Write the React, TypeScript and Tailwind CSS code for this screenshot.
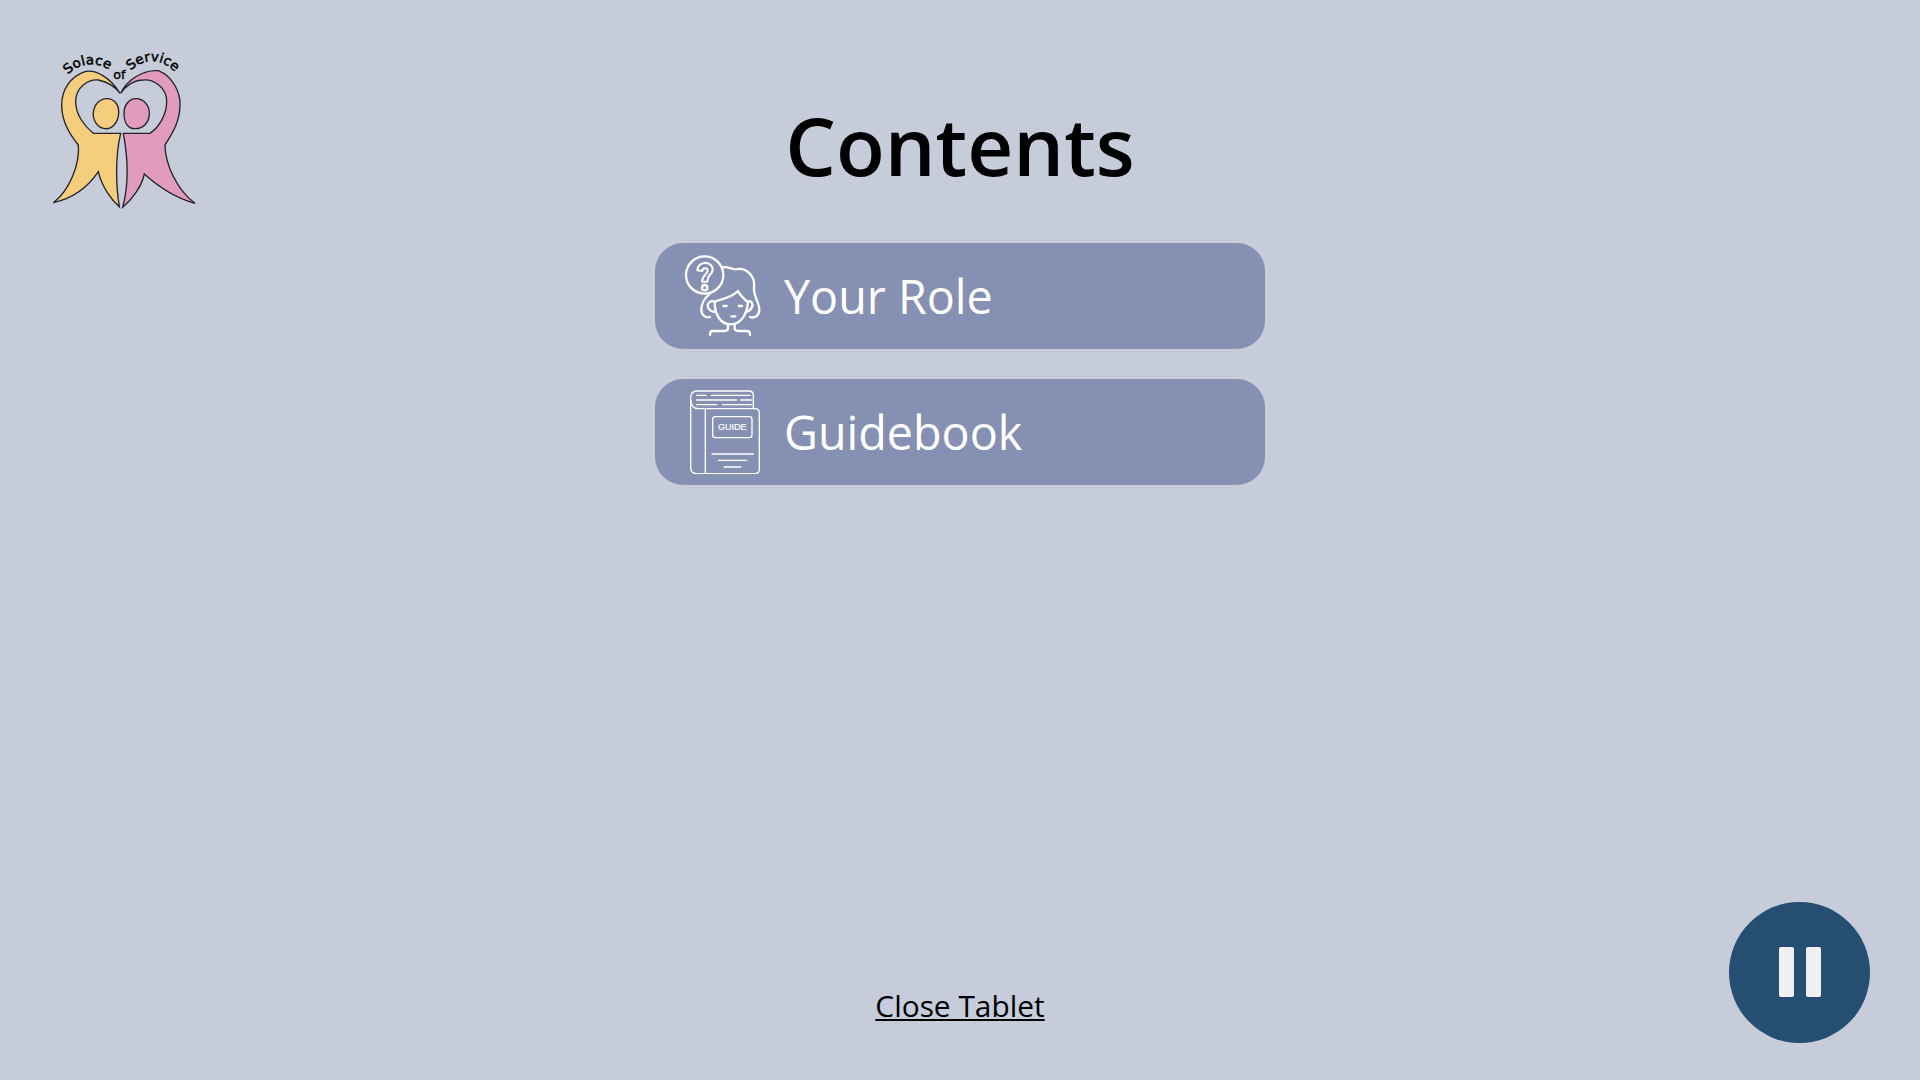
function Logo() {
  return (
    <svg width="190" height="190" viewBox="0 0 570 570" className="absolute left-[30px] top-[30px]">
      <defs>
        <path id="arc1" d="M114 134 C150 96 205 92 250 128" />
        <path id="arc2" d="M302 122 C345 80 405 84 446 140" />
      </defs>
      <path
        d="M270 190 C240 140 195 118 165 125 C120 140 95 180 95 225 C95 280 125 320 145 345 C150 400 120 480 70 518 C130 505 175 470 205 425 C215 470 245 510 268 530 C258 470 255 380 272 310 L190 310 C165 290 137 255 137 215 C137 170 175 148 205 150 C235 155 260 175 270 190 Z"
        fill="#f4cd7d" stroke="#23232b" strokeWidth="4"
      />
      <path
        d="M272 190 C290 150 340 118 385 122 C430 140 452 190 450 225 C450 280 420 320 405 345 C405 400 440 480 495 520 C440 505 385 470 343 432 C335 470 305 510 278 532 C295 470 295 390 280 310 L360 310 C390 290 410 250 410 215 C410 170 370 148 340 150 C310 150 285 170 272 190 Z"
        fill="#e09bbd" stroke="#23232b" strokeWidth="4"
      />
      <path d="M228 206 C250 204 268 222 266 250 C264 280 245 298 225 296 C203 294 188 272 190 248 C192 224 208 208 228 206 Z" fill="#f4cd7d" stroke="#23232b" strokeWidth="4" />
      <path d="M318 206 C342 206 360 228 358 254 C356 280 338 296 315 296 C295 296 282 280 282 250 C282 224 298 206 318 206 Z" fill="#e09bbd" stroke="#23232b" strokeWidth="4" />
      <text fontFamily="'DejaVu Sans', sans-serif" fontSize="40" fill="#000" stroke="#000" strokeWidth="1.5">
        <textPath href="#arc1" textLength="135" lengthAdjust="spacing">Solace</textPath>
      </text>
      <text x="250" y="146" fontFamily="'DejaVu Sans', sans-serif" fontSize="38" fill="#000" stroke="#000" strokeWidth="1.2">of</text>
      <text fontFamily="'DejaVu Sans', sans-serif" fontSize="40" fill="#000" stroke="#000" strokeWidth="1.5">
        <textPath href="#arc2" textLength="150" lengthAdjust="spacing">Service</textPath>
      </text>
    </svg>
  );
}

function RoleIcon() {
  return (
    <svg width="80" height="84" viewBox="100 60 240 252" fill="none" stroke="#fff" strokeWidth="7" strokeLinecap="round" strokeLinejoin="round" className="mt-[2px]">
      <circle cx="162" cy="120" r="56" />
      <path d="M140 106 C140 90 154 83 166 84 C182 85 190 100 184 111 C178 122 170 122 170 140 H154 C154 122 172 116 171 106 C170 98 156 97 155 108 Z" strokeWidth="6" />
      <circle cx="162" cy="158" r="8" />
      <path d="M216 97 C235 92 245 108 262 102 C290 100 315 125 310 160 C308 180 328 210 326 225 C325 245 310 250 298 246" />
      <path d="M176 178 C160 190 152 210 152 225 C152 240 165 250 178 246" />
      <path d="M192 200 C205 195 240 190 262 168 C270 185 285 195 292 202 C288 240 270 268 240 268 C210 268 192 240 192 200 Z" />
      <path d="M192 200 C180 195 168 205 172 216 C175 226 185 232 194 230" />
      <path d="M292 200 C302 195 308 208 304 216 C300 226 295 228 288 230" />
      <path d="M218 213 H228 M264 213 H274 M242 244 H254" />
      <path d="M232 268 V280 C232 286 228 288 222 288 H186 C180 288 178 292 178 300" />
      <path d="M252 268 V280 C252 286 256 288 262 288 H290 C296 288 298 292 298 300" />
    </svg>
  );
}

function GuideIcon() {
  return (
    <svg width="70" height="84" viewBox="120 60 210 252" fill="none" stroke="#fff" strokeWidth="4" strokeLinecap="round" strokeLinejoin="round" className="ml-[1px]">
      <path d="M166 116 H314 C323 116 328 122 328 130 V298 C328 306 322 311 314 311 H140 C128 311 122 303 122 292 V88" />
      <path d="M310 116 V76 C310 68 304 63 296 63 H140 C128 63 122 72 122 86 C122 104 130 116 146 116 H166" />
      <path d="M166 116 V311" />
      <path d="M140 76 H168 M184 76 H300 M140 90 H260 M272 90 H304 M140 104 H200 M218 104 H304 " />
      <rect x="188" y="140" width="118" height="63" rx="8" />
      <text x="247" y="181" textAnchor="middle" fontFamily="'Liberation Sans', sans-serif" fontSize="27" fill="#fff" stroke="#fff" strokeWidth="0.6">GUIDE</text>
      <path d="M186 252 H310 M205 271 H290 M222 291 H272" />
    </svg>
  );
}

function MenuButton({ label, children }: { label: string; children: React.ReactNode }) {
  return (
    <button className="flex h-[106px] w-[610px] items-center rounded-[28px] bg-[#8590b3] pl-[29px] text-[46.67px] text-white">
      <span className="flex w-[80px] justify-center">{children}</span>
      <span className="ml-[20px]">{label}</span>
    </button>
  );
}

export default function App() {
  return (
    <div className="relative flex h-screen w-full flex-col items-center overflow-hidden bg-[#c6ccd9] font-['Open_Sans',sans-serif] text-black">
      <Logo />
      <h1 className="mt-[90px] text-[80px] leading-[110px] font-semibold">Contents</h1>
      <div className="mt-[43px] flex flex-col gap-[30px]">
        <MenuButton label="Your Role"><RoleIcon /></MenuButton>
        <MenuButton label="Guidebook"><GuideIcon /></MenuButton>
      </div>
      <a className="mt-auto mb-[52px] text-[29.87px] leading-[44px] underline">Close Tablet</a>
      <button className="absolute top-[902px] left-[1729px] flex h-[141px] w-[141px] items-center justify-center gap-[12px] rounded-full bg-[#254e70]">
        <span className="mt-[-2px] h-[50px] w-[15px] rounded-[2px] bg-[#f0f0f0]" />
        <span className="mt-[-2px] h-[50px] w-[15px] rounded-[2px] bg-[#f0f0f0]" />
      </button>
    </div>
  );
}
